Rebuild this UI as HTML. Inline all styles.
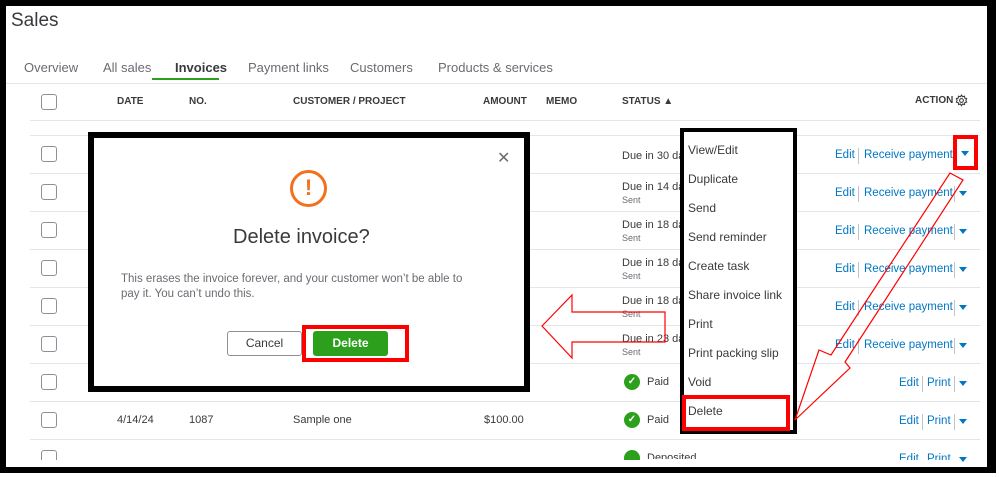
<!DOCTYPE html>
<html><head><meta charset="utf-8"><style>
*{margin:0;padding:0;box-sizing:border-box}
body{width:999px;height:477px;background:#fff;position:relative;overflow:hidden;font-family:"Liberation Sans",sans-serif;color:#393a3d}
.a{position:absolute;white-space:nowrap}
.frame{position:absolute;left:0;top:0;width:996px;height:473px;border:6px solid #000;border-right-width:9px;border-bottom-width:6px}
.hl{position:absolute;left:30px;width:950px;height:1px;background:#e3e5e8}
.cb{position:absolute;left:41px;width:16px;height:16px;border:1.5px solid #8d9096;border-radius:3px;background:#fff}
.th{font-size:10px;font-weight:bold;color:#393a3d}
.tab{font-size:13px;color:#6b6c72;top:60px}
.st{font-size:11px;color:#393a3d}
.sent{font-size:9px;color:#6b6c72}
.lk{font-size:11.5px;color:#0077c5}
.sep{position:absolute;width:1px;height:16px;background:#c1c4c8}
.car{position:absolute;width:0;height:0;border-left:4px solid transparent;border-right:4px solid transparent;border-top:5px solid #0077c5}
.chk{position:absolute;left:624px;width:16px;height:16px;border-radius:50%;background:#2ca01c;color:#fff;font-size:10px;text-align:center;line-height:16px;font-weight:bold}
.mi{font-size:12px;color:#393a3d;left:688px}
</style></head><body>
<div class="a" style="left:11px;top:10px;font-size:19px;color:#393a3d">Sales</div>
<div class="a tab" style="left:24px">Overview</div>
<div class="a tab" style="left:103px">All sales</div>
<div class="a tab" style="left:175px;color:#393a3d;font-weight:bold">Invoices</div>
<div class="a" style="left:152px;top:78px;width:67px;height:2px;background:#2ca01c"></div>
<div class="a tab" style="left:248px">Payment links</div>
<div class="a tab" style="left:350px">Customers</div>
<div class="a tab" style="left:438px">Products &amp; services</div>
<div class="hl" style="top:83px;left:6px;width:982px"></div>

<div class="cb" style="top:94px"></div>
<div class="a th" style="left:117px;top:96px">DATE</div>
<div class="a th" style="left:189px;top:96px">NO.</div>
<div class="a th" style="left:293px;top:96px">CUSTOMER / PROJECT</div>
<div class="a th" style="left:483px;top:96px">AMOUNT</div>
<div class="a th" style="left:546px;top:96px">MEMO</div>
<div class="a th" style="left:622px;top:96px">STATUS ▲</div>
<div class="a th" style="left:915px;top:95px">ACTION</div>
<svg class="a" style="left:955px;top:94px" width="13" height="13" viewBox="0 0 24 24" fill="none" stroke="#393a3d" stroke-width="2"><circle cx="12" cy="12" r="3.5"/><path d="M12 2l2 3 3.5-1 .5 3.5 3.5 1-1.5 3.5 1.5 3-3.5 1-.5 3.5-3.5-1-2 3-2-3-3.5 1-.5-3.5-3.5-1 1.5-3.5-1.5-3 3.5-1 .5-3.5 3.5 1z"/></svg>
<div class="hl" style="top:120px"></div>
<div class="hl" style="top:135px"></div>
<div class="hl" style="top:173px"></div>
<div class="hl" style="top:211px"></div>
<div class="hl" style="top:249px"></div>
<div class="hl" style="top:287px"></div>
<div class="hl" style="top:325px"></div>
<div class="hl" style="top:363px"></div>
<div class="hl" style="top:401px"></div>
<div class="hl" style="top:439px"></div>

<div class="cb" style="top:146px"></div>
<div class="cb" style="top:184px"></div>
<div class="cb" style="top:222px"></div>
<div class="cb" style="top:260px"></div>
<div class="cb" style="top:298px"></div>
<div class="cb" style="top:336px"></div>
<div class="cb" style="top:374px"></div>
<div class="cb" style="top:412px"></div>
<div class="cb" style="top:450px;height:10px;border-bottom:none;border-radius:3px 3px 0 0"></div>

<div class="a st" style="left:622px;top:150px">Due in 30 da</div>
<div class="a st" style="left:622px;top:181px">Due in 14 da</div><div class="a sent" style="left:622px;top:195px">Sent</div>
<div class="a st" style="left:622px;top:219px">Due in 18 da</div><div class="a sent" style="left:622px;top:233px">Sent</div>
<div class="a st" style="left:622px;top:257px">Due in 18 da</div><div class="a sent" style="left:622px;top:271px">Sent</div>
<div class="a st" style="left:622px;top:295px">Due in 18 da</div><div class="a sent" style="left:622px;top:309px">Sent</div>
<div class="a st" style="left:622px;top:333px">Due in 23 da</div><div class="a sent" style="left:622px;top:347px">Sent</div>
<div class="chk" style="top:374px">✓</div><div class="a st" style="left:647px;top:376px">Paid</div>
<div class="chk" style="top:412px">✓</div><div class="a st" style="left:647px;top:414px">Paid</div>
<div class="chk" style="top:450px;height:10px;border-radius:8px 8px 0 0"></div><div class="a st" style="left:647px;top:452px;height:7px;overflow:hidden">Deposited</div>

<div class="a st" style="left:117px;top:414px">4/14/24</div>
<div class="a st" style="left:189px;top:414px">1087</div>
<div class="a st" style="left:293px;top:414px">Sample one</div>
<div class="a st" style="left:484px;top:414px">$100.00</div>

<div class="a lk" style="left:835px;top:149px">Edit</div><div class="sep" style="left:858px;top:148px"></div><div class="a lk" style="left:864px;top:149px">Receive payment</div>
<div class="a lk" style="left:835px;top:187px">Edit</div><div class="sep" style="left:858px;top:186px"></div><div class="a lk" style="left:864px;top:187px">Receive payment</div><div class="sep" style="left:954px;top:186px"></div><div class="car" style="left:959px;top:191px"></div>
<div class="a lk" style="left:835px;top:225px">Edit</div><div class="sep" style="left:858px;top:224px"></div><div class="a lk" style="left:864px;top:225px">Receive payment</div><div class="sep" style="left:954px;top:224px"></div><div class="car" style="left:959px;top:229px"></div>
<div class="a lk" style="left:835px;top:263px">Edit</div><div class="sep" style="left:858px;top:262px"></div><div class="a lk" style="left:864px;top:263px">Receive payment</div><div class="sep" style="left:954px;top:262px"></div><div class="car" style="left:959px;top:267px"></div>
<div class="a lk" style="left:835px;top:301px">Edit</div><div class="sep" style="left:858px;top:300px"></div><div class="a lk" style="left:864px;top:301px">Receive payment</div><div class="sep" style="left:954px;top:300px"></div><div class="car" style="left:959px;top:305px"></div>
<div class="a lk" style="left:835px;top:339px">Edit</div><div class="sep" style="left:858px;top:338px"></div><div class="a lk" style="left:864px;top:339px">Receive payment</div><div class="sep" style="left:954px;top:338px"></div><div class="car" style="left:959px;top:343px"></div>
<div class="a lk" style="left:899px;top:377px">Edit</div><div class="sep" style="left:922px;top:376px"></div><div class="a lk" style="left:927px;top:377px">Print</div><div class="sep" style="left:954px;top:376px"></div><div class="car" style="left:959px;top:381px"></div>
<div class="a lk" style="left:899px;top:415px">Edit</div><div class="sep" style="left:922px;top:414px"></div><div class="a lk" style="left:927px;top:415px">Print</div><div class="sep" style="left:954px;top:414px"></div><div class="car" style="left:959px;top:419px"></div>
<div class="a lk" style="left:899px;top:453px;height:7px;overflow:hidden">Edit</div><div class="a lk" style="left:927px;top:453px;height:7px;overflow:hidden">Print</div><div class="car" style="left:959px;top:457px"></div>
<div class="car" style="left:961px;top:151px"></div>
<div class="a" style="left:953px;top:135px;width:25px;height:35px;border:4px solid #f00"></div>

<div class="a" style="left:88px;top:132px;width:442px;height:260px;border:6px solid #000;background:#fff"></div>
<div class="a" style="left:497px;top:148px;font-size:16px;color:#6b6c72">✕</div>
<div class="a" style="left:290px;top:170px;width:37px;height:37px;border:3.5px solid #f2711c;border-radius:50%;color:#f2711c;text-align:center;font-size:22px;font-weight:bold;line-height:30px">!</div>
<div class="a" style="left:233px;top:226px;font-size:20px;color:#393a3d">Delete invoice?</div>
<div class="a" style="left:121px;top:272px;font-size:11.5px;color:#6b6c72;line-height:15px">This erases the invoice forever, and your customer won’t be able to<br>pay it. You can’t undo this.</div>
<div class="a" style="left:227px;top:331px;width:75px;height:25px;border:1px solid #8d9096;border-radius:3px;font-size:12px;text-align:center;line-height:23px;color:#393a3d">Cancel</div>
<div class="a" style="left:302px;top:325px;width:107px;height:37px;border:4px solid #f00"></div>
<div class="a" style="left:313px;top:331px;width:75px;height:25px;background:#2ca01c;border-radius:3px;font-size:12px;font-weight:bold;text-align:center;line-height:25px;color:#fff">Delete</div>

<div class="a" style="left:680px;top:128px;width:117px;height:306px;border:4px solid #000;background:#fff"></div>
<div class="a mi" style="top:143px">View/Edit</div>
<div class="a mi" style="top:172px">Duplicate</div>
<div class="a mi" style="top:201px">Send</div>
<div class="a mi" style="top:230px">Send reminder</div>
<div class="a mi" style="top:259px">Create task</div>
<div class="a mi" style="top:288px">Share invoice link</div>
<div class="a mi" style="top:317px">Print</div>
<div class="a mi" style="top:346px">Print packing slip</div>
<div class="a mi" style="top:375px">Void</div>
<div class="a mi" style="top:404px">Delete</div>
<div class="a" style="left:682px;top:395px;width:108px;height:36px;border:4px solid #f00"></div>

<svg class="a" style="left:0;top:0" width="999" height="477">
<polygon points="542,326 572,295 572,312 665,312 665,342 572,342 572,358" fill="none" stroke="#f00" stroke-width="1.2"/>
<polygon points="950,173 963,180 845,362 850,368 795,420 819,350 831,355" fill="none" stroke="#f00" stroke-width="1.2"/>
</svg>
<div class="frame"></div>
</body></html>
